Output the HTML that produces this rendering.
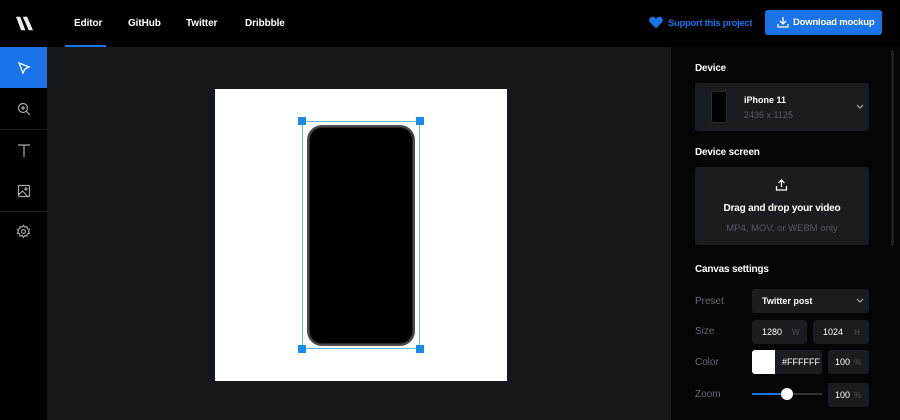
<!DOCTYPE html>
<html><head><style>
*{box-sizing:border-box;margin:0;padding:0}
body{width:900px;height:420px;overflow:hidden;background:#000;font-family:"Liberation Sans",sans-serif;color:#fff;position:relative}
.a{position:absolute}
.nav{font-size:10px;font-weight:bold;top:18px;letter-spacing:-0.1px}
.box{background:#1a1c20;border-radius:3px}
.lbl{font-size:10px;color:#666a70}
.h{font-size:10px;font-weight:bold;letter-spacing:-0.2px}
.side{left:0;width:47px;height:41px;display:flex;align-items:center;justify-content:center}
.sep{left:0;width:47px;height:1px;background:#1f2125}
.chev{font-size:10px;color:#aaa}
</style></head><body>
<!-- top -->
<svg class="a" style="left:16px;top:16px" width="17" height="15" viewBox="0 0 20 16"><path d="M0 0h5l6 16H6zM8 0h5l7 16h-5z" fill="#eee"/></svg>
<div class="a nav" style="left:74px">Editor</div>
<div class="a" style="left:65px;top:45px;width:41px;height:2px;background:#1a73e8"></div>
<div class="a nav" style="left:128px">GitHub</div>
<div class="a nav" style="left:186px">Twitter</div>
<div class="a nav" style="left:245px">Dribbble</div>
<svg class="a" style="left:649px;top:16px" width="14" height="13" viewBox="0 0 24 22"><path d="M12 21L2 11C-1 8 0 2 6 1c3 0 5 2 6 4 1-2 3-4 6-4 6 1 7 7 4 10z" fill="#1a73e8"/></svg>
<div class="a" style="left:668px;top:18px;font-size:9.5px;font-weight:bold;color:#1a73e8;letter-spacing:-0.3px">Support this project</div>
<div class="a" style="left:765px;top:10px;width:117px;height:25px;background:#1a73e8;border-radius:3px;font-size:9.5px;font-weight:bold;display:flex;align-items:center;padding-left:28px;letter-spacing:-0.2px;white-space:nowrap">Download mockup</div>
<svg class="a" style="left:777px;top:16px" width="12" height="12" viewBox="0 0 12 12" fill="none" stroke="#fff" stroke-width="1.3"><path d="M6 1v7M3 5l3 3 3-3M1 8v3h10V8"/></svg>
<!-- sidebar -->
<div class="a side" style="top:47px;background:#1a73e8"><svg width="14" height="14" viewBox="0 0 14 14" fill="none" stroke="#fff" stroke-width="1.3"><path d="M2 2l10 4-4 2-2 4z"/></svg></div>
<div class="a side" style="top:88px"><svg width="14" height="14" viewBox="0 0 14 14" fill="none" stroke="#aaa" stroke-width="1.2"><circle cx="6" cy="6" r="4.5"/><path d="M9.5 9.5L13 13M6 4v4M4 6h4"/></svg></div>
<div class="a sep" style="top:129px"></div>
<div class="a side" style="top:129px"><svg width="14" height="14" viewBox="0 0 14 14" fill="none" stroke="#aaa" stroke-width="1.2"><path d="M1 2h12M7 2v12"/></svg></div>
<div class="a side" style="top:170px"><svg width="14" height="14" viewBox="0 0 14 14" fill="none" stroke="#aaa" stroke-width="1.2"><rect x="1.5" y="1.5" width="11" height="11" rx="1"/><path d="M1.5 11l4-4 5 5"/><circle cx="9" cy="5" r="1"/></svg></div>
<div class="a sep" style="top:211px"></div>
<div class="a side" style="top:211px"><svg width="15" height="15" viewBox="0 0 24 24" fill="none" stroke="#aaa" stroke-width="1.8"><circle cx="12" cy="12" r="3"/><path d="M12 2l2 3 3.5-1 .5 3.5 3.5 1-1.5 3.5 1.5 3-3.5 1-.5 3.5-3.5-1-2 3-2-3-3.5 1-.5-3.5-3.5-1 1.5-3-1.5-3.5 3.5-1L6.5 4 10 5z"/></svg></div>
<!-- canvas -->
<div class="a" style="left:47px;top:47px;width:623px;height:373px;background:#15171b"></div>
<div class="a" style="left:215px;top:89px;width:292px;height:292px;background:#fff"></div>
<div class="a" style="left:307px;top:125px;width:108px;height:221px;background:#4a4a4c;border-radius:15px"></div>
<div class="a" style="left:309px;top:127px;width:104px;height:217px;background:#000;border-radius:13px;border:1px solid #2a2a2a"></div>
<div class="a" style="left:302px;top:121px;width:118px;height:228px;border:1px solid #6cb4f0"></div>
<div class="a" style="left:298px;top:117px;width:8px;height:8px;background:#1a8be8"></div>
<div class="a" style="left:416px;top:117px;width:8px;height:8px;background:#1a8be8"></div>
<div class="a" style="left:298px;top:345px;width:8px;height:8px;background:#1a8be8"></div>
<div class="a" style="left:416px;top:345px;width:8px;height:8px;background:#1a8be8"></div>
<!-- right panel -->
<div class="a" style="left:670px;top:47px;width:230px;height:373px;background:#050505;border-left:1px solid #1a1c20"></div>
<div class="a" style="left:891px;top:50px;width:3px;height:196px;background:#1e1e20"></div>
<div class="a h" style="left:695px;top:63px">Device</div>
<div class="a box" style="left:695px;top:83px;width:174px;height:48px"></div>
<div class="a" style="left:711px;top:91px;width:16px;height:32px;background:#000;border:1px solid #2a2a2a;border-radius:3px"></div>
<div class="a" style="left:744px;top:95px;font-size:9px;font-weight:bold">iPhone 11</div>
<div class="a" style="left:744px;top:110px;font-size:9px;color:#555a60">2436 x 1125</div>
<svg class="a" style="left:856px;top:104px" width="8" height="6" viewBox="0 0 8 6" fill="none" stroke="#aaa" stroke-width="1.2"><path d="M1 1l3 3 3-3"/></svg>
<div class="a h" style="left:695px;top:147px">Device screen</div>
<div class="a box" style="left:695px;top:167px;width:174px;height:78px"></div>
<svg class="a" style="left:775px;top:179px" width="13" height="12" viewBox="0 0 12 12" fill="none" stroke="#fff" stroke-width="1.2"><path d="M6 8V1M3 4l3-3 3 3M1 7v4h10V7"/></svg>
<div class="a" style="left:695px;top:203px;width:174px;text-align:center;font-size:10px;font-weight:bold;letter-spacing:-0.2px">Drag and drop your video</div>
<div class="a" style="left:695px;top:223px;width:174px;text-align:center;font-size:9.5px;color:#555a60">MP4, MOV, or WEBM only</div>
<div class="a h" style="left:695px;top:264px">Canvas settings</div>
<div class="a lbl" style="left:695px;top:296px">Preset</div>
<div class="a box" style="left:752px;top:289px;width:117px;height:24px"></div>
<div class="a" style="left:762px;top:296px;font-size:9px;font-weight:bold">Twitter post</div>
<svg class="a" style="left:856px;top:298px" width="8" height="6" viewBox="0 0 8 6" fill="none" stroke="#aaa" stroke-width="1.2"><path d="M1 1l3 3 3-3"/></svg>
<div class="a lbl" style="left:695px;top:326px">Size</div>
<div class="a box" style="left:752px;top:320px;width:55px;height:24px"></div>
<div class="a" style="left:762px;top:327px;font-size:9px">1280</div><div class="a" style="left:792px;top:328px;font-size:8px;color:#555">W</div>
<div class="a box" style="left:813px;top:320px;width:56px;height:24px"></div>
<div class="a" style="left:823px;top:327px;font-size:9px">1024</div><div class="a" style="left:854px;top:328px;font-size:8px;color:#555">H</div>
<div class="a lbl" style="left:695px;top:357px">Color</div>
<div class="a box" style="left:752px;top:350px;width:70px;height:24px"></div>
<div class="a" style="left:752px;top:350px;width:23px;height:24px;background:#fff;border-radius:3px 0 0 3px"></div>
<div class="a" style="left:782px;top:357px;font-size:9px">#FFFFFF</div>
<div class="a box" style="left:828px;top:350px;width:41px;height:24px"></div>
<div class="a" style="left:835px;top:357px;font-size:9px">100</div><div class="a" style="left:854px;top:358px;font-size:8px;color:#555">%</div>
<div class="a lbl" style="left:695px;top:389px">Zoom</div>
<div class="a" style="left:752px;top:393px;width:70px;height:2px;background:#333"></div>
<div class="a" style="left:752px;top:393px;width:35px;height:2px;background:#1a73e8"></div>
<div class="a" style="left:781px;top:388px;width:12px;height:12px;border-radius:50%;background:#fff"></div>
<div class="a box" style="left:828px;top:383px;width:41px;height:24px"></div>
<div class="a" style="left:835px;top:390px;font-size:9px">100</div><div class="a" style="left:854px;top:391px;font-size:8px;color:#555">%</div>
</body></html>
